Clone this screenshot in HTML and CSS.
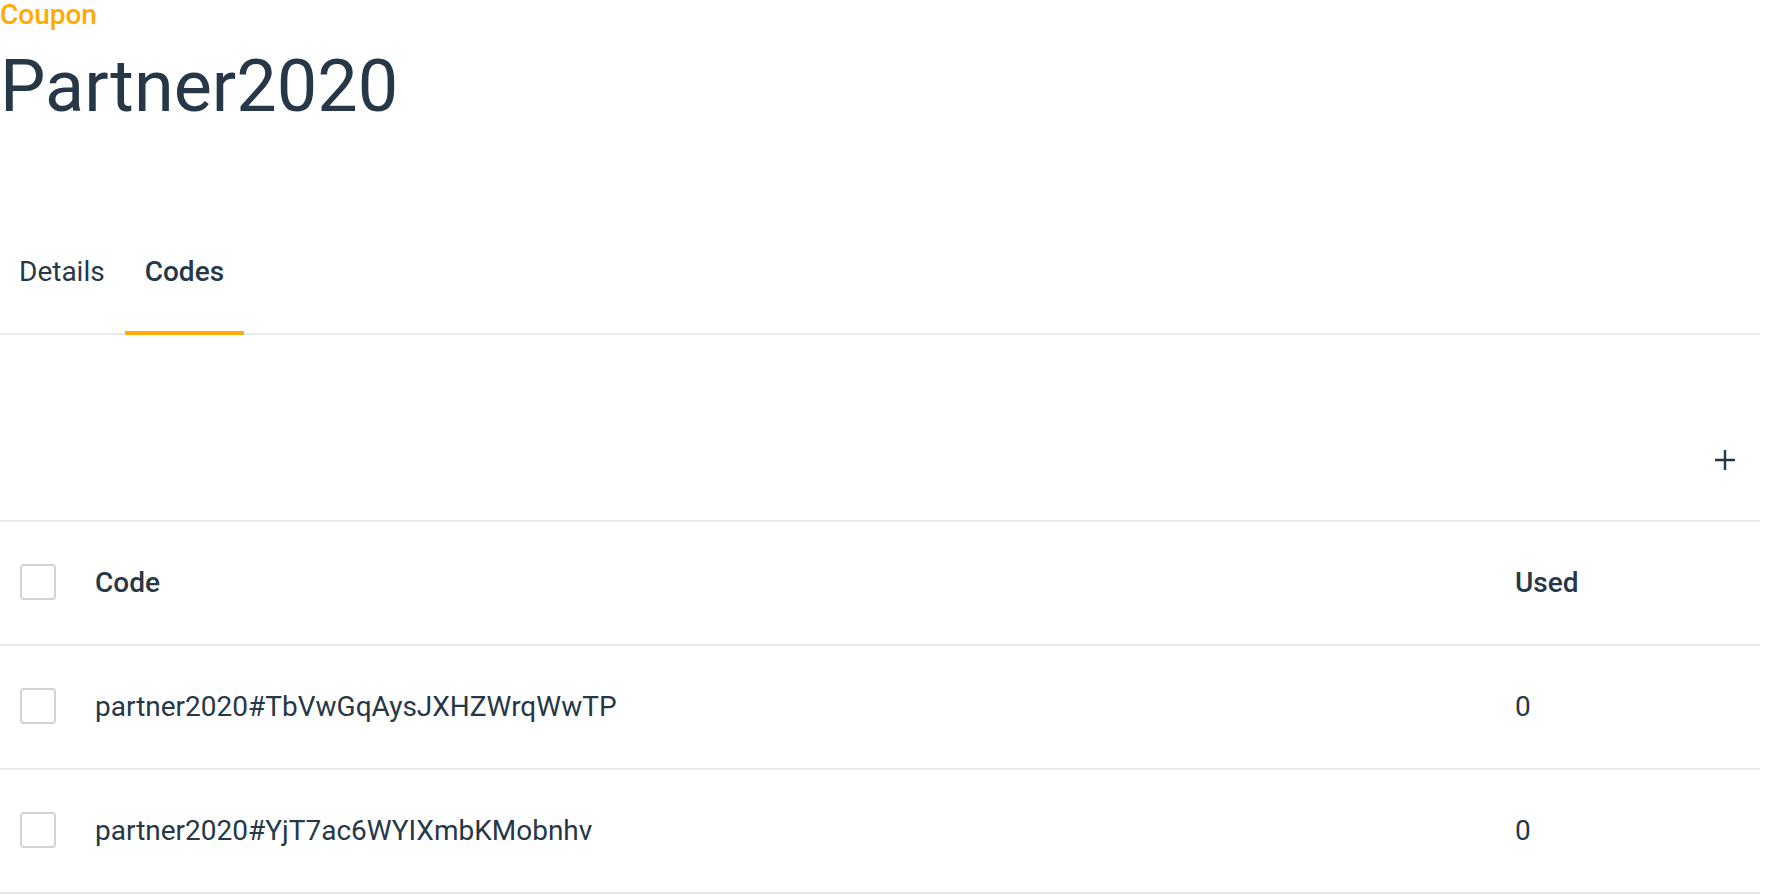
FILE: index.html
```html
<!DOCTYPE html>
<html lang="en">
<head>
<meta charset="utf-8">
<title>Partner2020</title>
<link rel="stylesheet" href="styles.css">
</head>
<body>
<div class="page">
  <header class="head">
    <div class="eyebrow">Coupon</div>
    <h1 class="title">Partner2020</h1>
  </header>
  <nav class="tabs">
    <div class="tab">Details</div>
    <div class="tab tab-active">Codes</div>
  </nav>
  <div class="toolbar">
    <button class="icon-btn" aria-label="Add">
      <svg width="20" height="20" viewBox="0 0 20 20"><path d="M10 0v20M0 10h20" stroke="#263847" stroke-width="2.4" fill="none"/></svg>
    </button>
  </div>
  <div class="table">
    <div class="row row-head">
      <div class="cell-check"><span class="checkbox"></span></div>
      <div class="cell-code">Code</div>
      <div class="cell-used">Used</div>
    </div>
    <div class="row">
      <div class="cell-check"><span class="checkbox"></span></div>
      <div class="cell-code">partner2020#TbVwGqAysJXHZWrqWwTP</div>
      <div class="cell-used">0</div>
    </div>
    <div class="row">
      <div class="cell-check"><span class="checkbox"></span></div>
      <div class="cell-code">partner2020#YjT7ac6WYIXmbKMobnhv</div>
      <div class="cell-used">0</div>
    </div>
  </div>
</div>
</body>
</html>
```
FILE: styles.css
```css
html, body {
  margin: 0;
  padding: 0;
  background: #ffffff;
}
body {
  font-family: Roboto, "Liberation Sans", Arial, sans-serif;
  color: #263847;
  overflow: hidden;
}
.page {
  margin-right: 9px;
}
.eyebrow {
  color: #ffab00;
  font-size: 28px;
  font-weight: 500;
  line-height: 1.1;
}
.title {
  margin: 13px 0 0 0;
  font-size: 72px;
  font-weight: 400;
  line-height: 1.2;
}
.tabs {
  display: flex;
  margin-top: 83px;
  border-bottom: 2px solid #e8e9ea;
}
.tab {
  padding: 42px 20px;
  font-size: 28px;
  line-height: 1.2;
  border-bottom: 4px solid transparent;
  margin-bottom: -2px;
}
.tab:first-child {
  padding-left: 19px;
}
.tab-active {
  font-weight: 500;
  border-bottom-color: #ffab00;
}
.toolbar {
  height: 185px;
  display: flex;
  justify-content: flex-end;
  align-items: flex-end;
  padding: 0 11px 36px 0;
  box-sizing: border-box;
}
.icon-btn {
  width: 48px;
  height: 48px;
  border: 0;
  background: transparent;
  padding: 0;
  display: flex;
  align-items: center;
  justify-content: center;
}
.table {
  border-top: 2px solid #e8e9ea;
}
.row {
  display: flex;
  align-items: center;
  height: 122px;
  border-bottom: 2px solid #e8e9ea;
  font-size: 28px;
  line-height: 1.2;
}
.row-head {
  font-weight: 500;
}
.cell-check {
  width: 95px;
  padding-left: 20px;
  box-sizing: border-box;
  display: flex;
  align-items: center;
}
.checkbox {
  display: block;
  width: 36px;
  height: 36px;
  box-sizing: border-box;
  border: 2px solid #d0d4d6;
  border-radius: 4px;
  margin-top: -2px;
}
.cell-code {
  flex: 1;
}
.cell-used {
  width: 245px;
}
```
